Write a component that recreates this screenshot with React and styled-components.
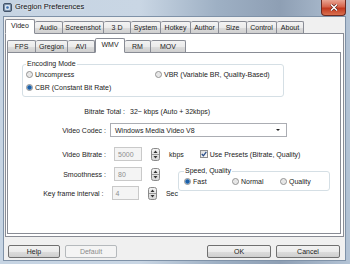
import React from "react";
import styled, { createGlobalStyle } from "styled-components";

const Global = createGlobalStyle`
  html, body { margin: 0; padding: 0; }
  body {
    background: #a9bacd;
    font-family: "Liberation Sans", Arial, sans-serif;
    font-size: 7px;
    color: #1b1b1b;
  }
  * { box-sizing: border-box; }
`;

const Window = styled.div`
  width: 350px;
  height: 264px;
  display: flex;
  flex-direction: column;
  padding: 0 4px 3px 3px;
  overflow: hidden;
  background: linear-gradient(90deg, #c6d4e3 0%, #c9d6e4 40%, #9eb0c4 62%, #8e9fb4 80%, #b3c3d5 100%);
`;

const TitleBar = styled.div`
  height: 16px;
  display: flex;
  align-items: flex-start;
  gap: 3px;
  padding-top: 3px;
`;

const Title = styled.span`
  font-size: 7.5px;
  line-height: 8px;
  color: #111;
  text-shadow: 0 0 3px rgba(255, 255, 255, 0.9);
`;

const CloseBtn = styled.div`
  margin: -3px 0 0 auto;
  width: 25px;
  height: 16px;
  border: 1px solid #6b2a22;
  border-top: none;
  border-radius: 0 0 4px 4px;
  background: linear-gradient(180deg, #e9a493 0%, #d6644c 45%, #c2391f 55%, #d9704f 100%);
  display: flex;
  align-items: center;
  justify-content: center;
`;

const Client = styled.div`
  flex: 1;
  display: flex;
  flex-direction: column;
  background: #f0f0f0;
  border: 1px solid #7f92a8;
`;

const TabBar = styled.div`
  display: flex;
  align-items: flex-end;
  height: ${(p) => p.$h}px;
  padding-left: ${(p) => p.$pad}px;
  position: relative;
  z-index: 1;
`;

const Tab = styled.div`
  width: ${(p) => p.$w}px;
  height: ${(p) => (p.$active ? 15 : 12)}px;
  display: flex;
  align-items: center;
  justify-content: center;
  padding-bottom: ${(p) => (p.$active ? 2 : 0)}px;
  border: 1px solid #898c95;
  border-left-width: ${(p) => (p.$first || p.$active ? 1 : 0)}px;
  border-bottom: ${(p) => (p.$active ? "1px solid #fff" : "none")};
  margin-bottom: ${(p) => (p.$active ? -1 : 0)}px;
  border-radius: 2px 2px 0 0;
  background: ${(p) =>
    p.$active
      ? "#fff"
      : "linear-gradient(180deg, #f3f3f3 0%, #ebebeb 50%, #dddddd 51%, #cfcfcf 100%)"};
  white-space: nowrap;
`;

const OuterPanel = styled.div`
  flex: 1;
  display: flex;
  flex-direction: column;
  margin: 0 1px;
  padding: 3px 2px 2px 1px;
  background: #fff;
  border: 1px solid #898c95;
`;

const InnerPanel = styled.div`
  flex: 1;
  display: flex;
  flex-direction: column;
  background: #fff;
  border: 1px solid #898c95;
`;

const Group = styled.fieldset`
  margin: ${(p) => p.$m};
  width: ${(p) => p.$w}px;
  padding: 0 3px ${(p) => p.$pb}px ${(p) => p.$pl}px;
  border: 1px solid #d5dfe5;
  border-radius: 3px;
  min-width: 0;
`;

const Legend = styled.legend`
  padding: 0 1px;
  line-height: 8px;
  font-size: 7px;
  color: #1b1b1b;
`;

const RadioGrid = styled.div`
  display: grid;
  grid-template-columns: ${(p) => p.$cols};
  grid-auto-rows: 13px;
  align-items: center;
`;

const Choice = styled.label`
  display: flex;
  align-items: center;
  gap: 2px;
  white-space: nowrap;
`;

const RadioDot = styled.span`
  width: 7px;
  height: 7px;
  border-radius: 50%;
  border: 1px solid #8f8f8f;
  background: ${(p) =>
    p.$on
      ? "radial-gradient(circle, #1d5fa6 0 1.6px, #5b9ad9 2.2px, #e4e4e4 2.6px)"
      : "radial-gradient(circle, #e6e6e6 0 1.5px, #f6f6f6 3px)"};
  flex: none;
`;

const Row = styled.div`
  display: flex;
  align-items: center;
  gap: ${(p) => p.$gap || 4}px;
  height: ${(p) => p.$h || 14}px;
  margin-top: ${(p) => p.$mt}px;
`;

const Label = styled.span`
  width: ${(p) => p.$w}px;
  text-align: right;
  white-space: nowrap;
`;

const Combo = styled.div`
  width: 177px;
  height: 14px;
  display: flex;
  align-items: center;
  justify-content: space-between;
  padding: 0 4px;
  background: #fff;
  border: 1px solid #abadb3;
`;

const Arrow = styled.span`
  width: 0;
  height: 0;
  border-left: 2px solid transparent;
  border-right: 2px solid transparent;
  border-top: 2px solid #222;
  margin-right: 2px;
`;

const SpinBox = styled.div`
  width: 28px;
  height: 14px;
  display: flex;
  align-items: center;
  padding-left: 3px;
  color: #8e8e8e;
  background: #f4f4f4;
  border: 1px solid #c9c9c9;
`;

const Unit = styled.span`
  margin-left: 1px;
`;

const Check = styled.span`
  width: 8px;
  height: 8px;
  border: 1px solid #8f8f8f;
  background: linear-gradient(135deg, #dcdcdc, #fbfbfb);
  display: flex;
  align-items: center;
  justify-content: center;
  flex: none;
`;

const Lower = styled.div`
  display: grid;
  grid-template-columns: 170px 152px;
  align-items: start;
  margin-top: 6px;
`;

const Column = styled.div`
  display: flex;
  flex-direction: column;
`;

const ButtonBar = styled.div`
  height: 23px;
  display: flex;
  align-items: flex-start;
  gap: 5px;
  padding: 8px 5px 0 4px;
`;

const Button = styled.div`
  width: ${(p) => p.$w}px;
  height: 13px;
  display: flex;
  align-items: center;
  justify-content: center;
  border-radius: 2px;
  border: 1px solid ${(p) => (p.$off ? "#b5b9bc" : "#707070")};
  color: ${(p) => (p.$off ? "#8b8b8b" : "#1b1b1b")};
  background: ${(p) =>
    p.$off
      ? "#f4f4f4"
      : "linear-gradient(180deg, #f2f2f2 0%, #ebebeb 50%, #dddddd 51%, #cfcfcf 100%)"};
  margin-left: ${(p) => (p.$push ? "auto" : "0")};
`;

function AppIcon() {
  return (
    <svg width="9" height="9" viewBox="0 0 9 9">
      <rect x="0.5" y="0.5" width="8" height="8" rx="1.5" fill="#7a8ea6" stroke="#44546a" />
      <rect x="2" y="2" width="5" height="5" rx="1" fill="#d8e4f0" />
      <circle cx="4.5" cy="4.5" r="1.3" fill="#3b6fb0" />
    </svg>
  );
}

function Spinner() {
  return (
    <svg width="9" height="13" viewBox="0 0 9 13">
      <defs>
        <linearGradient id="sp" x1="0" y1="0" x2="0" y2="1">
          <stop offset="0" stopColor="#f4f4f4" />
          <stop offset="1" stopColor="#d6d6d6" />
        </linearGradient>
      </defs>
      <rect x="0.5" y="0.5" width="8" height="12" rx="2" fill="url(#sp)" stroke="#8a8a8a" />
      <line x1="1" y1="6.5" x2="8" y2="6.5" stroke="#9a9a9a" />
      <path d="M2.5 5 L4.5 2.5 L6.5 5 Z" fill="#333" />
      <path d="M2.5 8 L4.5 10.5 L6.5 8 Z" fill="#333" />
    </svg>
  );
}

function Radio({ on, children }) {
  return (
    <Choice>
      <RadioDot $on={on} />
      {children}
    </Choice>
  );
}

function SpinField({ label, value, unit }) {
  return (
    <Row $gap={0}>
      <Label $w={98}>{label}</Label>
      <SpinBox style={{ marginLeft: 4 }}>{value}</SpinBox>
      <span style={{ marginLeft: 5, display: "flex" }}>
        <Spinner />
      </span>
      {unit && <Unit style={{ marginLeft: 5 }}>{unit}</Unit>}
    </Row>
  );
}

const outerTabs = [
  ["Video", 30],
  ["Audio", 28],
  ["Screenshot", 41],
  ["3 D", 27],
  ["System", 30],
  ["Hotkey", 30],
  ["Author", 28],
  ["Size", 28],
  ["Control", 30],
  ["About", 27],
];

const innerTabs = [
  ["FPS", 29],
  ["Gregion", 32],
  ["AVI", 27],
  ["WMV", 30],
  ["RM", 26],
  ["MOV", 35],
];

export default function App() {
  return (
    <>
      <Global />
      <Window>
        <TitleBar>
          <AppIcon />
          <Title>Gregion Preferences</Title>
          <CloseBtn>
            <svg width="8" height="7" viewBox="0 0 8 7">
              <path d="M1 0.5 L7 6.5 M7 0.5 L1 6.5" stroke="#5a1a12" strokeWidth="2.6" />
              <path d="M1 0.5 L7 6.5 M7 0.5 L1 6.5" stroke="#fff" strokeWidth="1.5" />
            </svg>
          </CloseBtn>
        </TitleBar>
        <Client>
          <TabBar $h={16} $pad={1}>
            {outerTabs.map(([t, w], i) => (
              <Tab key={t} $w={w} $active={t === "Video"} $first={i === 0}>
                {t}
              </Tab>
            ))}
          </TabBar>
          <OuterPanel>
            <TabBar $h={15} $pad={0}>
              {innerTabs.map(([t, w], i) => (
                <Tab key={t} $w={w} $active={t === "WMV"} $first={i === 0}>
                  {t}
                </Tab>
              ))}
            </TabBar>
            <InnerPanel>
              <Group $m="7px 0 0 14px" $w={262} $pb={2} $pl={3}>
                <Legend>Encoding Mode</Legend>
                <RadioGrid $cols="129px auto">
                  <Radio>Uncompress</Radio>
                  <Radio>VBR (Variable BR, Quality-Based)</Radio>
                  <Radio on>CBR (Constant Bit Rate)</Radio>
                </RadioGrid>
              </Group>

              <Row $h={10} $mt={9} $gap={5}>
                <Label $w={117}>Bitrate Total :</Label>
                <span>32~ kbps (Auto + 32kbps)</span>
              </Row>

              <Row $mt={7}>
                <Label $w={98}>Video Codec :</Label>
                <Combo>
                  <span>Windows Media Video V8</span>
                  <Arrow />
                </Combo>
              </Row>

              <Row $mt={10} $gap={0}>
                <SpinField label="Video Bitrate :" value="5000" unit="kbps" />
                <Choice style={{ marginLeft: 12 }}>
                  <Check>
                    <svg width="6" height="6" viewBox="0 0 6 6">
                      <path d="M0.8 3 L2.4 4.8 L5.3 0.8" fill="none" stroke="#2a4f8a" strokeWidth="1.3" />
                    </svg>
                  </Check>
                  Use Presets (Bitrate, Quality)
                </Choice>
              </Row>

              <Lower>
                <Column>
                  <SpinField label="Smoothness :" value="80" />
                  <div style={{ height: 5 }} />
                  <SpinField label="Key frame interval :" value="4" unit="Sec" />
                </Column>
                <Group $m="0" $w={152} $pb={2} $pl={5}>
                  <Legend>Speed, Quality</Legend>
                  <RadioGrid $cols="48px 48px auto">
                    <Radio on>Fast</Radio>
                    <Radio>Normal</Radio>
                    <Radio>Quality</Radio>
                  </RadioGrid>
                </Group>
              </Lower>
            </InnerPanel>
          </OuterPanel>
          <ButtonBar>
            <Button $w={52}>Help</Button>
            <Button $w={52} $off>
              Default
            </Button>
            <Button $w={64} $push>
              OK
            </Button>
            <Button $w={64}>Cancel</Button>
          </ButtonBar>
        </Client>
      </Window>
    </>
  );
}
